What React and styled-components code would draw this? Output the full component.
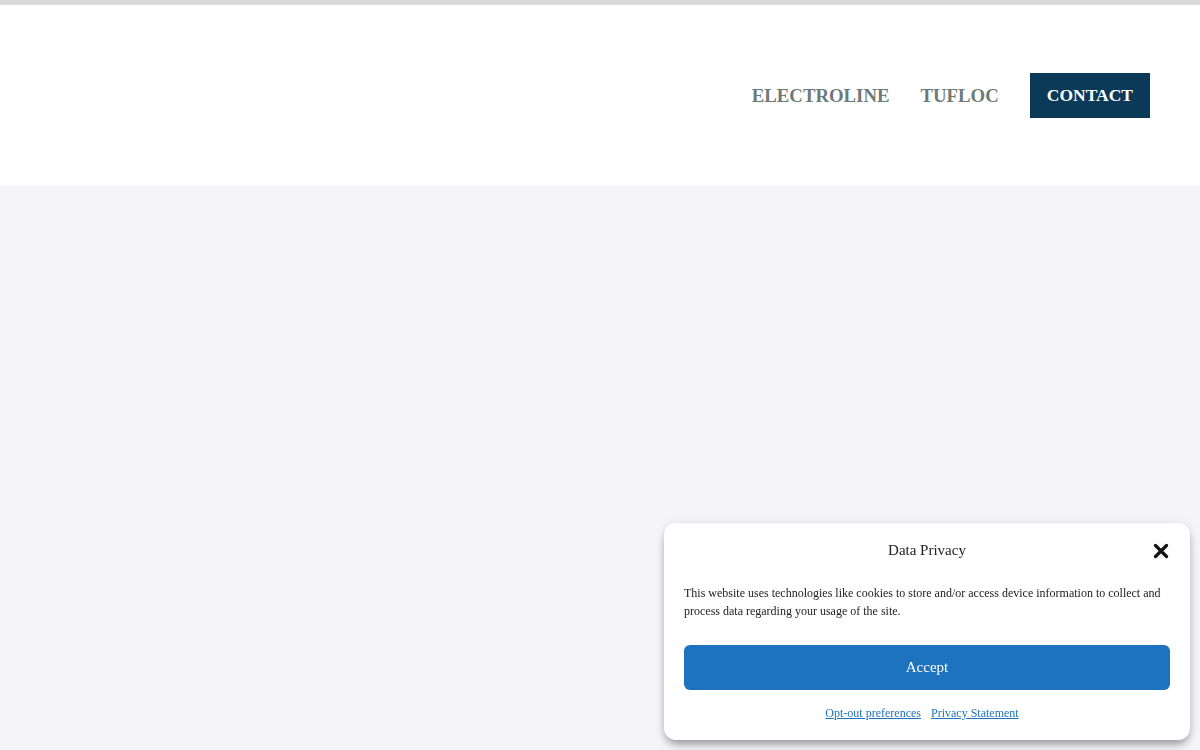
import React from "react";
import styled, { createGlobalStyle } from "styled-components";

const Global = createGlobalStyle`
  html, body { margin: 0; padding: 0; }
  body { font-family: "Liberation Serif", "Times New Roman", serif; background: #f5f5f9; }
  * { box-sizing: border-box; }
`;

const Page = styled.div`
  min-height: 750px;
  display: flex;
  flex-direction: column;
  background: #f5f5f9;
`;

const TopBar = styled.div`
  height: 5px;
  background: #d9d9d9;
`;

const Header = styled.header`
  height: 181px;
  background: #ffffff;
  display: flex;
  align-items: center;
  justify-content: flex-end;
  padding: 0 50px 0 0;
`;

const Nav = styled.nav`
  display: flex;
  align-items: center;
  gap: 31px;
`;

const NavLink = styled.a`
  font-family: "Liberation Serif", "Times New Roman", serif;
  font-weight: 700;
  font-size: ${(p) => (p.$cta ? "17.5px" : "18.8px")};
  color: ${(p) => (p.$cta ? "#ffffff" : "#6e7a78")};
  background: ${(p) => (p.$cta ? "#0b3a59" : "transparent")};
  padding: ${(p) => (p.$cta ? "0 17px" : "0")};
  height: 45px;
  display: flex;
  align-items: center;
  text-decoration: none;
`;

const Main = styled.main`
  flex: 1;
  background: #f5f5f9;
`;

const Banner = styled.div`
  position: fixed;
  right: 10px;
  bottom: 10px;
  width: 526px;
  height: 217px;
  background: #ffffff;
  border-radius: 12px;
  box-shadow: 0 6px 10px -2px rgba(0, 0, 0, 0.38), 0 0 12px rgba(0, 0, 0, 0.08);
  padding: 17px 20px 0 20px;
  display: flex;
  flex-direction: column;
  color: #222;
`;

const BannerHead = styled.div`
  position: relative;
  height: 20px;
  display: flex;
  align-items: center;
  justify-content: center;
`;

const Title = styled.div`
  font-size: 15px;
  color: #222;
`;

const Close = styled.button`
  position: absolute;
  right: 0;
  top: 2px;
  width: 18px;
  height: 18px;
  padding: 0;
  border: 0;
  background: transparent;
  display: flex;
  align-items: center;
  justify-content: center;
`;

const Message = styled.p`
  margin: 24px 0 0 0;
  font-size: 12px;
  line-height: 18px;
  color: #222;
`;

const Accept = styled.button`
  margin-top: 25px;
  height: 45px;
  width: 100%;
  border: 0;
  border-radius: 6px;
  background: #1e73be;
  color: #ffffff;
  font-family: "Liberation Serif", "Times New Roman", serif;
  font-size: 15px;
`;

const Links = styled.div`
  margin-top: 16px;
  padding-right: 10px;
  display: flex;
  justify-content: center;
  gap: 10px;
`;

const LinkText = styled.a`
  font-size: 12px;
  color: #1e73be;
  text-decoration: underline;
`;

export default function App() {
  return (
    <>
      <Global />
      <Page>
        <TopBar />
        <Header>
          <Nav>
            <NavLink href="#">ELECTROLINE</NavLink>
            <NavLink href="#">TUFLOC</NavLink>
            <NavLink href="#" $cta>CONTACT</NavLink>
          </Nav>
        </Header>
        <Main />
      </Page>
      <Banner>
        <BannerHead>
          <Title>Data Privacy</Title>
          <Close aria-label="close">
            <svg width="16" height="16" viewBox="0 0 16 16">
              <path d="M2.5 2.5 L13.5 13.5 M13.5 2.5 L2.5 13.5" stroke="#111" strokeWidth="3.2" strokeLinecap="round" />
            </svg>
          </Close>
        </BannerHead>
        <Message>
          This website uses technologies like cookies to store and/or access device information to collect and process data regarding your usage of the site.
        </Message>
        <Accept>Accept</Accept>
        <Links>
          <LinkText href="#">Opt-out preferences</LinkText>
          <LinkText href="#">Privacy Statement</LinkText>
        </Links>
      </Banner>
    </>
  );
}
